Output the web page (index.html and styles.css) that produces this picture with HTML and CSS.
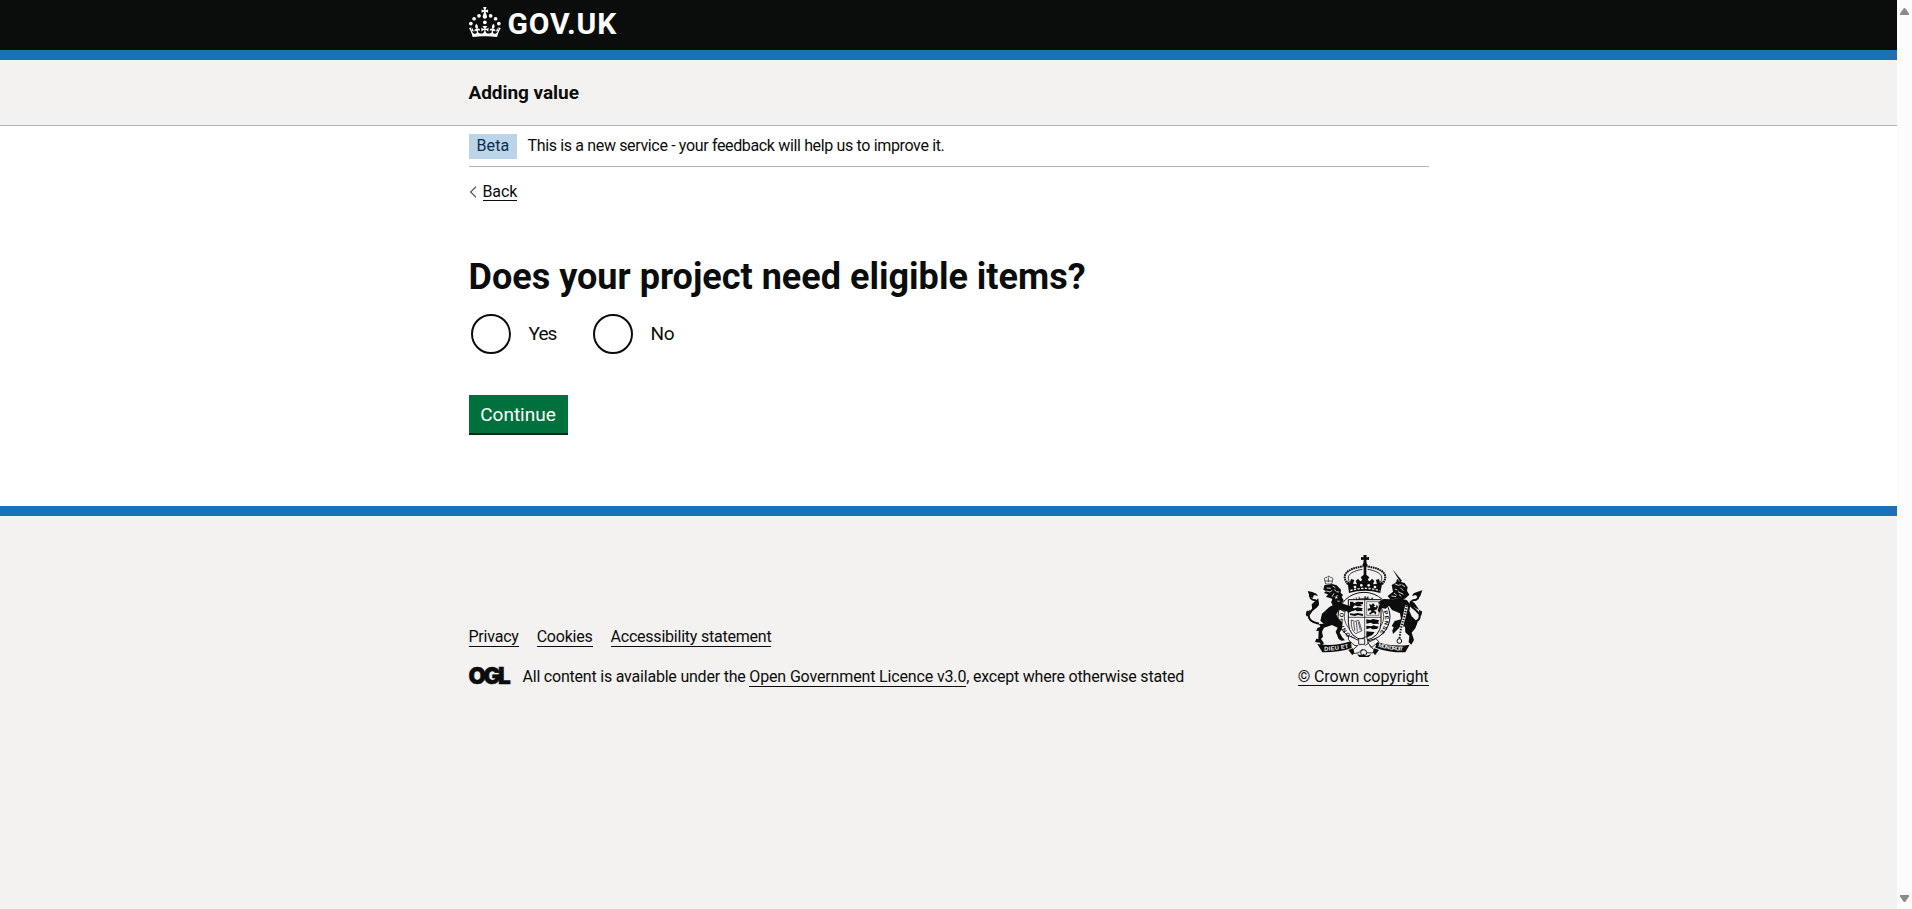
FILE: index.html
```html
<!DOCTYPE html>
<html lang="en">
<head>
<meta charset="utf-8">
<title>Adding value</title>
<link rel="stylesheet" href="styles.css">
</head>
<body>
<div class="viewport">
  <div class="page">
    <header class="header">
      <div class="container header-inner">
        <svg class="crown" viewBox="0 0 64 60" fill="#fff" aria-hidden="true">
          <circle cx="20" cy="17.6" r="3.7"/><circle cx="10.2" cy="23.5" r="3.7"/><circle cx="3.7" cy="33.2" r="3.7"/><circle cx="31.7" cy="30.6" r="3.7"/><circle cx="43.3" cy="17.6" r="3.7"/><circle cx="53.2" cy="23.5" r="3.7"/><circle cx="59.7" cy="33.2" r="3.7"/>
          <path d="M33.1,9.8c.2-.1.3-.3.5-.5l4.6,2.4v-6.8l-4.6,1.5c-.1-.2-.3-.3-.5-.5l1.9-5.9h-6.7l1.9,5.9c-.2.1-.3.3-.5.5l-4.6-1.5v6.8l4.6-2.4c.1.2.3.3.5.5l-2.6,8c-.9,2.8,1.2,5.7,4.1,5.7h0c3,0,5.1-2.9,4.1-5.7l-2.6-8ZM37,37.9s-3.4,3.8-4.1,6.1c2.2,0,4.2-.5,6.4-2.8l-.7,8.5c-2-2.8-4.4-4.1-5.7-3.8.1,3.1.5,6.7,5.8,7.2,3.7.3,6.7-1.5,7-3.8.4-2.6-2-4.3-3.7-1.6-1.4-4.5,2.4-6.1,4.9-3.2-1.9-4.5-1.8-7.7,2.4-10.9,3,4,2.6,7.3-1.2,11.1,2.4-1.3,6.2,0,4,4.6-1.2-2.8-3.7-2.2-4.2.2-.3,1.7.7,3.7,3,4.2,1.9.3,4.7-.9,7-5.9-1.3,0-2.4.7-3.9,1.7l2.4-8c.6,2.3,1.4,3.7,2.2,4.5.6-1.6.5-2.8,0-5.3l5,1.8c-2.6,3.6-5.2,8.7-7.3,17.5-7.4-1.1-15.7-1.7-24.5-1.7h0c-8.8,0-17.1.6-24.5,1.7-2.1-8.9-4.7-13.9-7.3-17.5l5-1.8c-.5,2.5-.6,3.7,0,5.3.8-.8,1.6-2.3,2.2-4.5l2.4,8c-1.5-1-2.6-1.7-3.9-1.7,2.3,5,5.2,6.2,7,5.9,2.3-.4,3.3-2.4,3-4.2-.5-2.4-3-3.1-4.2-.2-2.2-4.6,1.6-6,4-4.6-3.7-3.7-4.2-7.1-1.2-11.1,4.2,3.2,4.3,6.4,2.4,10.9,2.5-2.8,6.3-1.3,4.9,3.2-1.8-2.7-4.1-1-3.7,1.6.3,2.3,3.3,4.1,7,3.8,5.4-.5,5.7-4.2,5.8-7.2-1.3-.2-3.7,1-5.7,3.8l-.7-8.5c2.2,2.3,4.2,2.7,6.4,2.8-.7-2.3-4.1-6.1-4.1-6.1h10.6Z"/>
        </svg>
        <span class="logotype">GOV.UK</span>
      </div>
    </header>
    <div class="service"><div class="container"><span class="service-name">Adding value</span></div></div>
    <main class="container main">
      <div class="phase"><strong class="tag">Beta</strong><span class="phase-text">This is a new service - your feedback will help us to improve it.</span></div>
      <div class="back"><svg class="chevron" viewBox="0 0 8 12" aria-hidden="true"><path d="M7 .8 1.600 6l5.400 5.200" fill="none" stroke="#505a5f" stroke-width="1.2"/></svg><a class="link back-link">Back</a></div>
      <h1 class="title">Does your project need eligible items?</h1>
      <div class="radios">
        <label class="radio"><span class="ring"></span><span class="radio-label yes">Yes</span></label>
        <label class="radio"><span class="ring"></span><span class="radio-label">No</span></label>
      </div>
      <button class="button">Continue</button>
    </main>
    <footer class="footer">
      <div class="container footer-inner">
        <div class="footer-meta">
          <nav class="footer-links"><a class="link">Privacy</a><a class="link">Cookies</a><a class="link">Accessibility statement</a></nav>
          <div class="licence"><span class="ogl">OGL</span><span class="licence-text">All content is available under the <a class="link ogl-link">Open Government Licence v3.0</a>, except where otherwise stated</span></div>
        </div>
        <div class="crown-copy">
          <svg class="arms" viewBox="62 33 375 306" fill="#0b0c0c" aria-hidden="true">
            <!-- crown -->
            <path d="M249 33h10l-1 7 8-1v9l-8-1 1 11q5 4 1 9l-2 2v36h-8V69l-2-2q-4-5 1-9l1-11-8 1v-9l8 1z"/>
            <path d="M203 121C180 94 198 74 248 67M305 121C328 94 310 74 260 67" fill="none" stroke="#0b0c0c" stroke-width="6" stroke-dasharray="5 2"/>
            <path d="M210 117C194 96 210 82 246 76M298 117C314 96 298 82 262 76" fill="none" stroke="#0b0c0c" stroke-width="2.500"/>
            <path d="M201 109l7 9 4-13 10 3-4 11 12 2-4-10 7-7 7 8 6-4-5-8 13-11 13 11-5 8 6 4 7-8 7 7-4 10 12-2-4-11 10-3 4 13 7-9-7 38q-47-14-94 0z"/>
            <path d="M210 140q44-14 88 0" fill="none" stroke="#f3f2f1" stroke-width="4" stroke-dasharray="7 4"/>
            <g fill="#f3f2f1"><circle cx="224" cy="129" r="4"/><circle cx="243" cy="124" r="4"/><circle cx="265" cy="124" r="4"/><circle cx="284" cy="129" r="4"/></g>
            <!-- garter and shield -->
            <ellipse cx="251" cy="218" rx="78" ry="73" fill="#f3f2f1" stroke="#0b0c0c" stroke-width="3"/>
            <ellipse cx="251" cy="218" rx="59" ry="55" fill="#f3f2f1" stroke="#0b0c0c" stroke-width="2"/>
            <path id="garter" d="M224 279A63 58 0 1 1 284 276" fill="none"/>
            <text class="garter"><textPath href="#garter" textLength="300">HONI SOIT QUI MAL Y PENSE</textPath></text>
            <path d="M204 167h98v68q0 45-49 55-49-10-49-55z" fill="#f3f2f1" stroke="#0b0c0c" stroke-width="3"/>
            <path d="M253 167v121M204 220h98" stroke="#0b0c0c" stroke-width="2"/>
            <path d="M209 173h8l5 5 8-5 18 1v6l-9 2 8 4-16 1-7-3-5 4-10-4zM209 191l14 2 8-3 17 3-4 4 4 4-18 1-5-4-7 4-9-4zM209 208l12 1 10-2 17 3v6l-15-3-9 3-15-3zM258 226l12 2 8-3 19 4-4 6 4 4-18 1-8-4-13 3zM258 245l15 2 6-3 16 4-5 7-14 1-6-4-12 4zM258 262l13 1 12 1-7 9-18 8z"/>
            <path d="M213 228q10 8 22 1l10 31-19 9q-15-11-13-41zm7 6 3 26m5-27 3 30m3-29 6 24" fill="none" stroke="#0b0c0c" stroke-width="2"/>
            <path d="M259 173h37v41h-37z" fill="none" stroke="#0b0c0c" stroke-width="1.5"/>
            <path d="m266 179 7 4 5-5 6 6-4 5 7 1 2-8 4 6-4 9-8 1 7 7-2 7-5-6-6 2-6 4-3-5 7-3-2-6-8 3-1-7 8-2z"/>
            <!-- lion -->
            <path d="M133 108q-3-8 7-8l3-3h4l3 3q10 0 7 8l-3 12h-18z" fill="#f3f2f1" stroke="#0b0c0c" stroke-width="2"/><path d="M134 111h21m-11-11v15" stroke="#0b0c0c" stroke-width="2"/>
            <path d="M132 124l24-4 13 4 13 13-1 9 7 7-4 6 6 10-6 9 24 8 2-8 9 5-2 17-13 7-4-5-24-5-8 14 6 15 13 9-2 19-7 12 8 14 8 9-11 1-8-5-9-22 6-12-17-8-24 8-6 12 3 15-6 7 9 13-9 8-3-10-15-2 4-10 6 1 1-25-8 1 5-10 8-2-4-9 14-1-10-9 5-21 22-20 10-5-5-10 4-9-9-4-10-2 6-8-12-4 6-6-8-4z"/>
            <path d="M139 132l13 1m-14 8 11 3 7-5m5 9-6 10m16-5-5 12m-18 3 7 3m8-35 3 6m-9-16 8 5m3 12 8 1m-13 14 9 4m-1 9 7 1" fill="none" stroke="#f3f2f1" stroke-width="2.5"/>
            <path d="M116 239Q83 233 85 213q8-16 24-26 9-12-4-18-19-1-16-23m-7 70q-5-7 1-15" fill="none" stroke="#0b0c0c" stroke-width="6"/>
            <path d="M82 141l14 3 12 5 5 7-12-3-4 9-9-5zM94 181l20-18 2 20-20 16zM80 205l9-8-2 17z"/>
            <!-- unicorn -->
            <path d="M336 75l29 35-5 5z"/>
            <path d="M334 123l14-9 2-10 9 9 14 4 9 13-2 10 7 12-8 8-7 5-27-1-14 3-9-11 16-13z"/>
            <path d="M342 119l12 5 8-2m-18 13 7 3m9-7 9 9m-16 3 16 8m-28-4 8 7m-16 2 14 2m9-6 7 5m1-35 10 6" fill="none" stroke="#f3f2f1" stroke-width="2.5"/>
            <path d="M310 165l28 1 22-3 20 6 10 13-3 19 7 16 18 18-7 18-11 13 7 22-8 14-8-7 2-19-12-11-1-17-12-2-24 24-2-10 4-10-6-4 9-15 19-5-3-18-24-10-9-13-10 9-13-2-5 14-6-6 6-19-4-6z"/>
            <path d="M391 235Q421 235 418 211q-12-15-25-24-8-12 5-18 20 0 18-23m2 70q6-7 2-13" fill="none" stroke="#0b0c0c" stroke-width="6"/>
            <path d="M426 139l-14 4-12 5-5 8 12-3 5 8 8-5zM388 170l14 6 15 22-23-12zM426 203l-10-6 1 17z"/>
            <path d="M379 185l-7 32-10 35-5 34" fill="none" stroke="#f3f2f1" stroke-width="9"/>
            <path d="M379 185l-7 32-10 35-5 34" fill="none" stroke="#0b0c0c" stroke-width="6" stroke-dasharray="4 4"/>
            <circle cx="357" cy="291" r="7" fill="#f3f2f1" stroke="#0b0c0c" stroke-width="3"/>
            <!-- motto scroll and buckle -->
            <path d="M111 300q50 9 101-8l2 20q-40 14-88 13zM388 302q-49 8-99-9l-4 18q40 15 90 14z"/>
            <path id="motto-left" d="M132 320q38 0 76-10" fill="none"/>
            <path id="motto-right" d="M293 308q36 12 85 12" fill="none"/>
            <g class="motto"><text><textPath href="#motto-left" textLength="74">DIEU ET</textPath></text><text><textPath href="#motto-right" textLength="76">MON DROIT</textPath></text></g>
            <path d="M205 275l27 13 27-10 5 20-14 10-28-4-18-17z" fill="#f3f2f1" stroke="#0b0c0c" stroke-width="2.5"/>
            <path d="M235 284h18v17h-18zM262 296l25-12 8 9-20 17zM233 304l-17 15 3 10 17-3 9-10 12 10 20 1 5-9-15-13" fill="#f3f2f1" stroke="#0b0c0c" stroke-width="2.5"/>
            <circle cx="250" cy="326" r="9" fill="#f3f2f1" stroke="#0b0c0c" stroke-width="3"/><path d="M204 318l14-5 4 12-6 9zM296 318l-14-5-4 12 6 9zM230 331l15 3 5-5 6 7 17-5-8 8h-28z"/>
          </svg>
          <a class="link copy-link">© Crown copyright</a>
        </div>
      </div>
    </footer>
  </div>
  <div class="scrollbar" aria-hidden="true">
    <svg width="9" height="7" viewBox="0 0 9 7"><path d="M0 7V5.5L3.5.6Q4.500 -.4 5.500.6L9 5.500V7z" fill="#8b8b8b"/></svg>
    <svg width="9" height="7" viewBox="0 0 9 7"><path d="M0 0V1.500L3.500 6.400Q4.500 7.400 5.500 6.400L9 1.500V0z" fill="#8b8b8b"/></svg>
  </div>
</div>
</body>
</html>
```
FILE: styles.css
```css
* { box-sizing: border-box; }
body { margin: 0; font-family: Roboto, "Liberation Sans", sans-serif; font-size: 16px; line-height: 20px; color: #0b0c0c; background: #f3f2f1; }
.viewport { display: flex; height: 909px; overflow: hidden; }
.page { flex: 1; display: flex; flex-direction: column; background: #fff; }
.container { width: 960px; margin: 0 auto; }
.link { border-bottom: 1px solid #0b0c0c; letter-spacing: -0.22px; }

.header { height: 60px; background: #0b0c0c; border-bottom: 10px solid #1d70b8; }
.header-inner { display: flex; padding-top: 7px; }
.crown { width: 32px; height: 30px; }
.logotype { margin-left: 7px; color: #fff; font: 700 30px/34px Roboto, sans-serif; letter-spacing: 0.8px; }

.service { height: 66px; background: #f3f2f1; border-bottom: 1px solid #b1b4b6; }
.service-name { display: block; padding-top: 20px; font-size: 19px; line-height: 25px; font-weight: 700; letter-spacing: -0.05px; }

.main { height: 380px; }
.phase { display: flex; height: 41px; padding-top: 8px; border-bottom: 1px solid #b1b4b6; }
.tag { width: 48px; height: 25px; padding-left: 8px; background: #bbd4ea; color: #0c2d4a; font-weight: 400; line-height: 24px; letter-spacing: 0.1px; }
.phase-text { margin-left: 11px; line-height: 24px; letter-spacing: -0.35px; }
.back { display: flex; align-items: flex-start; padding-top: 15px; }
.chevron { width: 8px; height: 12px; margin-top: 4px; }
.back-link { height: 19px; margin-left: 6px; line-height: 19px; letter-spacing: -0.1px; }
.title { margin: 56px 0 0; font-size: 36px; line-height: 40px; font-weight: 700; letter-spacing: 0.01px; }
.radios { display: flex; margin-top: 17px; padding-left: 2px; }
.radio { display: flex; align-items: center; width: 122px; height: 40px; }
.ring { width: 40px; height: 40px; border: 2px solid #0b0c0c; border-radius: 50%; }
.radio-label { margin-left: 18px; font-size: 19px; letter-spacing: -0.3px; }
.yes { letter-spacing: -0.9px; }
.button { display: block; width: 99px; height: 40px; margin: 41px 0 0; padding: 0; border: 0; border-bottom: 2px solid #002d18; background: #00703c; color: #fff; font: 400 19px/39px Roboto, sans-serif; letter-spacing: 0; }

.footer { flex: 1; border-top: 10px solid #1d70b8; background: #f3f2f1; }
.footer-inner { display: flex; justify-content: space-between; align-items: flex-end; height: 170px; }
.footer-links { display: flex; gap: 18px; line-height: 18px; }
.licence { display: flex; align-items: flex-end; margin-top: 19px; line-height: 18px; }
.ogl { width: 42px; font: 900 22.5px/20px Inter, sans-serif; letter-spacing: -2.4px; -webkit-text-stroke: 0.5px #0b0c0c; }
.licence-text { margin-left: 12px; letter-spacing: -0.21px; }
.ogl-link { letter-spacing: -0.15px; }
.crown-copy { display: flex; flex-direction: column; align-items: center; }
.arms { width: 125px; height: 102px; margin-bottom: 11px; }
.copy-link { height: 18px; line-height: 18px; letter-spacing: -0.1px; }
.motto { fill: #f3f2f1; font: 700 17px "Liberation Sans", sans-serif; }
.garter { font: 700 17px "Liberation Sans", sans-serif; }

.scrollbar { width: 15px; display: flex; flex-direction: column; align-items: center; justify-content: space-between; padding: 8px 0 7px; background: #fcfcfc; }
```
